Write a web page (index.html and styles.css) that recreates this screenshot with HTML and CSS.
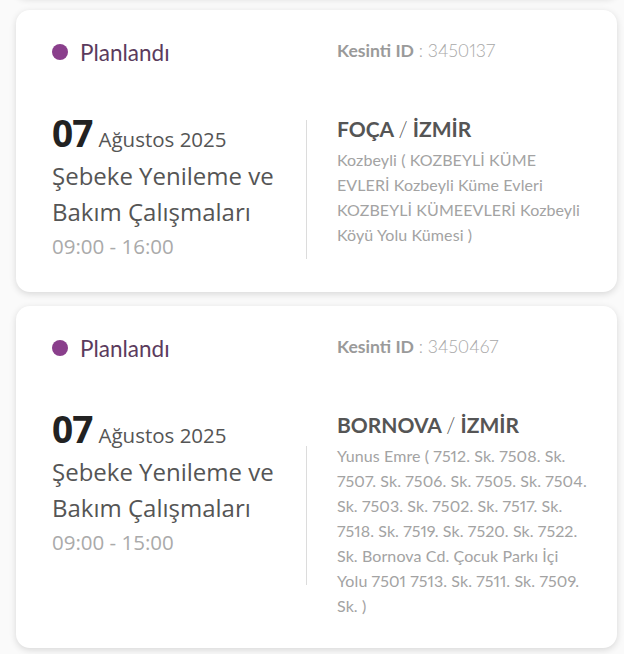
FILE: index.html
```html
<!DOCTYPE html>
<html lang="tr">
<head>
<meta charset="utf-8">
<link rel="stylesheet" href="styles.css">
</head>
<body>
<div class="list">
  <div class="card prev"></div>

  <div class="card">
    <div class="head">
      <div class="status"><span class="dot"></span><span class="status-text">Planlandı</span></div>
      <div class="kid"><b>Kesinti ID</b> : 3450137</div>
    </div>
    <div class="body">
      <div class="left">
        <div class="date"><span class="day">07</span> <span class="month">Ağustos 2025</span></div>
        <div class="title">Şebeke Yenileme ve Bakım Çalışmaları</div>
        <div class="time">09:00 - 16:00</div>
      </div>
      <div class="divider"></div>
      <div class="right">
        <div class="place">FOÇA <span class="slash">/</span> İZMİR</div>
        <div class="addr">Kozbeyli ( KOZBEYLİ KÜME EVLERİ Kozbeyli Küme Evleri KOZBEYLİ KÜMEEVLERİ Kozbeyli Köyü Yolu Kümesi )</div>
      </div>
    </div>
  </div>

  <div class="card">
    <div class="head">
      <div class="status"><span class="dot"></span><span class="status-text">Planlandı</span></div>
      <div class="kid"><b>Kesinti ID</b> : 3450467</div>
    </div>
    <div class="body">
      <div class="left">
        <div class="date"><span class="day">07</span> <span class="month">Ağustos 2025</span></div>
        <div class="title">Şebeke Yenileme ve Bakım Çalışmaları</div>
        <div class="time">09:00 - 15:00</div>
      </div>
      <div class="divider"></div>
      <div class="right">
        <div class="place">BORNOVA <span class="slash">/</span> İZMİR</div>
        <div class="addr">Yunus Emre ( 7512. Sk. 7508. Sk. 7507. Sk. 7506. Sk. 7505. Sk. 7504. Sk. 7503. Sk. 7502. Sk. 7517. Sk. 7518. Sk. 7519. Sk. 7520. Sk. 7522. Sk. Bornova Cd. Çocuk Parkı İçi Yolu 7501 7513. Sk. 7511. Sk. 7509. Sk. )</div>
      </div>
    </div>
  </div>
</div>
</body>
</html>
```

FILE: styles.css
```css
html, body {
  margin: 0;
  padding: 0;
  background: #fafafa;
}
body {
  font-family: "Open Sans", "Noto Sans", sans-serif;
}
.list {
  display: flex;
  flex-direction: column;
  gap: 14px;
  padding: 0 16px 0 16px;
  overflow: hidden;
  height: 654px;
  box-sizing: border-box;
}
.card {
  background: #fff;
  border-radius: 14px;
  box-shadow: 0 2px 7px rgba(0,0,0,0.14);
  padding: 28px 27px 30px 36px;
  width: 601px;
  box-sizing: border-box;
  flex-shrink: 0;
}
.card.prev {
  height: 20px;
  padding: 0;
  margin-top: -23px;
  margin-bottom: -1px;
}
.head {
  display: grid;
  grid-template-columns: 285px 1fr;
  align-items: center;
  height: 28px;
}
.status {
  display: flex;
  align-items: center;
  gap: 12px;
}
.dot {
  width: 16px;
  height: 16px;
  border-radius: 50%;
  background: #8a3f8c;
}
.status-text {
  font-family: Lato, sans-serif;
  font-size: 22.5px;
  color: #5b3b5d;
}
.kid {
  font-family: Lato, sans-serif;
  font-size: 17.6px;
  color: #a8a8a8;
  font-weight: 300;
  margin-bottom: 4px;
  font-variant-numeric: proportional-nums;
}
.kid b {
  font-weight: 700;
  color: #9a9a9a;
}
.body {
  display: grid;
  grid-template-columns: 254px 1px 1fr;
  column-gap: 0;
  margin-top: 50px;
  align-items: start;
}
.left {
  padding-right: 6px;
}
.date {
  line-height: 33px;
  color: #555;
}
.day {
  font-size: 37px;
  font-weight: 700;
  color: #222;
  letter-spacing: -1px;
}
.month {
  font-size: 20.5px;
  color: #555;
  margin-left: 2px;
}
.title {
  font-size: 24px;
  line-height: 36px;
  color: #555;
}
.time {
  font-size: 20.5px;
  line-height: 32px;
  color: #aaa;
}
.divider {
  width: 1px;
  height: 139px;
  background: #dcdcdc;
  align-self: center;
}
.right {
  padding-left: 30px;
  margin-top: -2px;
}
.place {
  font-family: Lato, sans-serif;
  font-size: 21px;
  font-weight: 700;
  color: #555;
  line-height: 30px;
}
.slash {
  font-weight: 300;
}
.addr {
  font-family: Lato, sans-serif;
  font-size: 16px;
  line-height: 25px;
  letter-spacing: 0.1px;
  font-variant-numeric: proportional-nums;
  color: #a3a3a3;
  margin-top: 3px;
}
```
